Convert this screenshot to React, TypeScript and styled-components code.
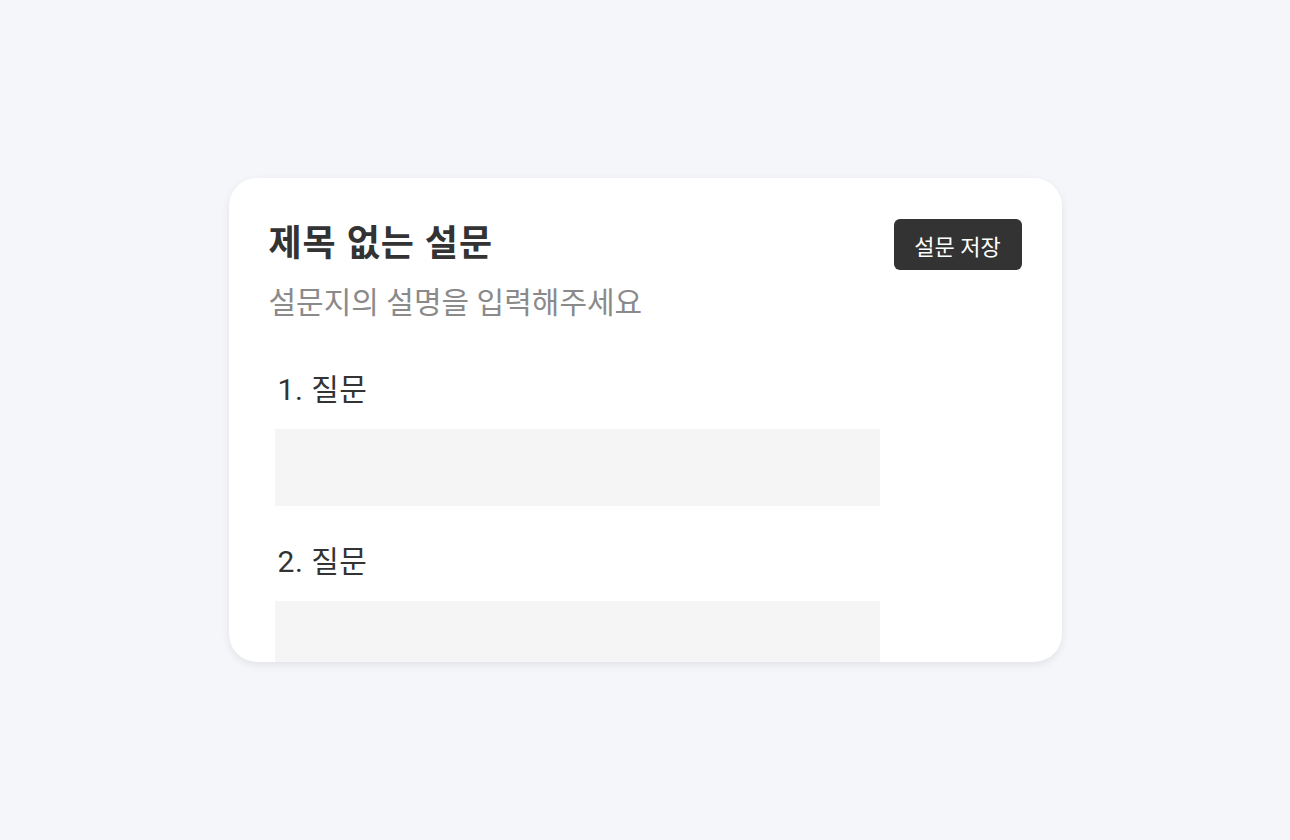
import styled, { createGlobalStyle } from "styled-components"

const GlobalStyle = createGlobalStyle`
    * {
        box-sizing: border-box;
    }

    body {
        margin: 0;
        background: #f5f6fa;
        font-family: Roboto, "Noto Sans CJK KR", "Noto Sans", sans-serif;
    }
`

const questions = [1, 2]

const App = () => {

    return (

        <Page>

            <GlobalStyle />

            <Card>

                <Header>

                    <TitleBlock>

                        <Title>제목 없는 설문</Title>

                        <Description>설문지의 설명을 입력해주세요</Description>

                    </TitleBlock>

                    <SaveButton>설문 저장</SaveButton>

                </Header>

                <QuestionList>

                    {questions.map((n) => (

                        <Question key={n}>

                            <QuestionLabel>{n}. 질문</QuestionLabel>

                            <AnswerBox />

                        </Question>

                    ))}

                </QuestionList>

            </Card>

        </Page>

    )

}

const Page = styled.div`
    width: 100%;
    height: 100vh;
    display: flex;
    align-items: center;
    justify-content: center;
`

const Card = styled.div`
    width: 833px;
    height: 484px;
    background: #ffffff;
    border-radius: 28px;
    box-shadow: 0 3px 8px rgba(0, 0, 0, 0.08);
    padding: 40px;
    overflow: hidden;
    display: flex;
    flex-direction: column;
`

const Header = styled.div`
    display: flex;
    justify-content: space-between;
    align-items: flex-start;
`

const TitleBlock = styled.div`
    display: flex;
    flex-direction: column;
    gap: 12px;
`

const Title = styled.h1`
    margin: 0;
    font-size: 36px;
    line-height: 53px;
    font-weight: 700;
    letter-spacing: 1px;
    color: #333333;
`

const Description = styled.p`
    margin: 0;
    font-size: 30px;
    line-height: 40px;
    font-weight: 400;
    color: #8a8a8a;
`

const SaveButton = styled.button`
    width: 128px;
    height: 51px;
    margin-top: 1px;
    border: none;
    border-radius: 6px;
    background: #333333;
    color: #ffffff;
    font-family: inherit;
    font-size: 22px;
    cursor: pointer;
`

const QuestionList = styled.div`
    display: flex;
    flex-direction: column;
    gap: 37px;
    margin-top: 48px;
    padding-left: 6px;
`

const Question = styled.div`
    display: flex;
    flex-direction: column;
    gap: 21px;
`

const QuestionLabel = styled.h2`
    margin: 0;
    padding-left: 3px;
    font-size: 30px;
    line-height: 37px;
    font-weight: 400;
    letter-spacing: 0.5px;
    color: #333333;
`

const AnswerBox = styled.div`
    width: 605px;
    height: 77px;
    background: #f5f5f5;
    flex-shrink: 0;
`

export default App
